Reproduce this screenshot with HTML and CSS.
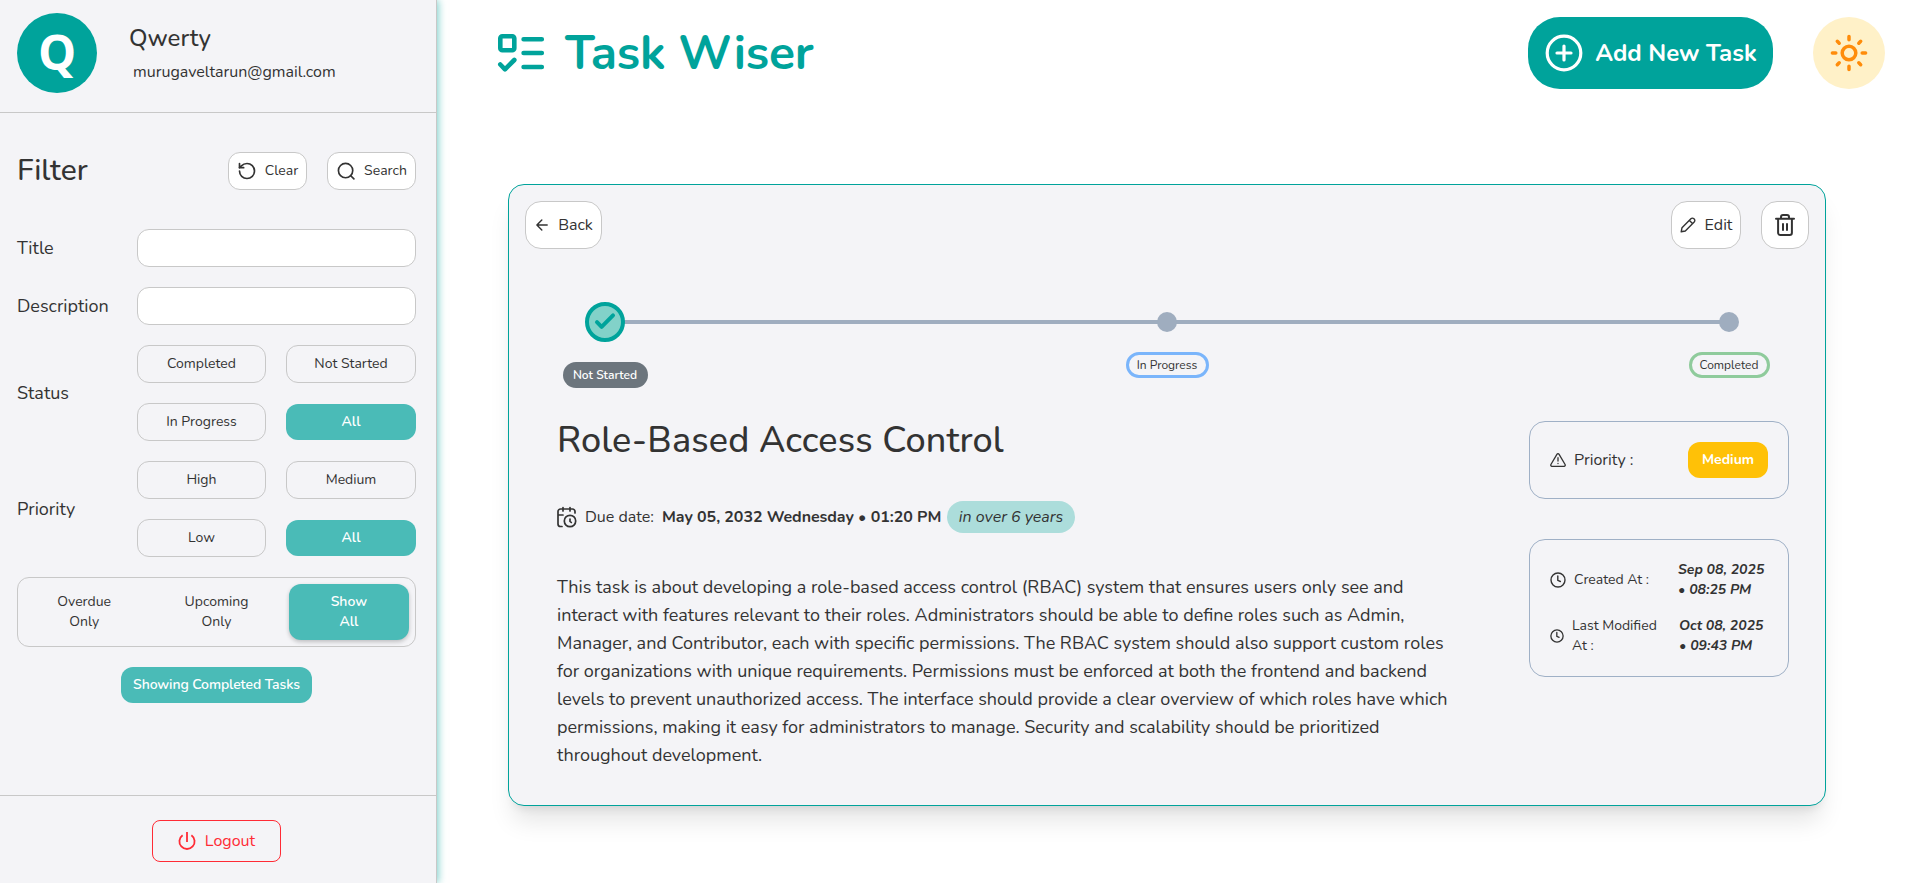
FILE: index.html
```html
<!DOCTYPE html>
<html lang="en">
<head>
<meta charset="utf-8">
<title>Task Wiser</title>
<link rel="stylesheet" href="styles.css">
</head>
<body>
<div class="app">
  <aside class="sidebar">
    <div class="profile">
      <div class="avatar"><span>Q</span></div>
      <div class="profile-text">
        <div class="user-name"><span>Qwerty</span></div>
        <div class="user-mail"><span>murugaveltarun@gmail.com</span></div>
      </div>
    </div>
    <div class="filters">
      <div class="filter-head">
        <h2 class="filter-title"><span>Filter</span></h2>
        <button class="tool tool-clear">
          <svg width="20" height="20" viewBox="0 0 24 24" fill="none" stroke="currentColor" stroke-width="2" stroke-linecap="round" stroke-linejoin="round"><path d="M3 12a9 9 0 1 0 9-9 9.750 9.750 0 0 0-6.740 2.740L3 8"/><path d="M3 3v5h5"/></svg>
          <span>Clear</span>
        </button>
        <button class="tool tool-search">
          <svg width="20" height="20" viewBox="0 0 24 24" fill="none" stroke="currentColor" stroke-width="2" stroke-linecap="round"><circle cx="11.500" cy="11.500" r="8.600"/><path d="M21.500 21.500l-3.800-3.800"/></svg>
          <span>Search</span>
        </button>
      </div>
      <div class="row"><label class="label"><span>Title</span></label><input class="field" type="text"></div>
      <div class="row"><label class="label"><span>Description</span></label><input class="field" type="text"></div>
      <div class="row">
        <div class="label"><span>Status</span></div>
        <div class="options">
          <button class="opt"><span>Completed</span></button><button class="opt"><span>Not Started</span></button>
          <button class="opt"><span>In Progress</span></button><button class="opt opt-on"><span>All</span></button>
        </div>
      </div>
      <div class="row">
        <div class="label"><span>Priority</span></div>
        <div class="options">
          <button class="opt"><span>High</span></button><button class="opt"><span>Medium</span></button>
          <button class="opt"><span>Low</span></button><button class="opt opt-on"><span>All</span></button>
        </div>
      </div>
      <div class="segments">
        <div class="seg"><span>Overdue<br>Only</span></div>
        <div class="seg"><span>Upcoming<br>Only</span></div>
        <div class="seg seg-on"><span>Show<br>All</span></div>
      </div>
      <button class="showing"><span>Showing Completed Tasks</span></button>
    </div>
    <div class="side-foot">
      <button class="logout">
        <svg width="18" height="20" viewBox="0 0 18 20" fill="none" stroke="currentColor" stroke-width="1.800"><path d="M9 1v10"/><path d="M4.600 4.200a7.600 7.600 0 1 0 8.800 0"/></svg>
        <span>Logout</span>
      </button>
    </div>
  </aside>
  <main class="main">
    <header class="top">
      <svg class="brand-icon" width="48" height="40" viewBox="0 0 48 40" fill="none" stroke="#00a39b" stroke-width="4.600" stroke-linecap="round" stroke-linejoin="round"><rect x="3.300" y="3.300" width="14" height="14" rx="2"/><path d="M3.300 31.500l4.700 4.800 9.300-9.300M26.600 6.200h18.200M26.600 20h18.200M26.600 34h18.200"/></svg>
      <h1 class="brand"><span>Task Wiser</span></h1>
      <button class="add">
        <svg width="38" height="38" viewBox="0 0 38 38" fill="none" stroke="currentColor" stroke-width="3.200" stroke-linecap="round"><circle cx="19" cy="19" r="16.800"/><path d="M19 12v14M12 19h14"/></svg>
        <span>Add New Task</span>
      </button>
      <button class="theme">
        <svg width="40" height="40" viewBox="0 0 40 40" fill="none" stroke="#ff8c0a" stroke-width="3.500" stroke-linecap="round"><circle cx="20" cy="20" r="6.800"/><path d="M20 3.400v3.400M20 33.200v3.400M3.400 20h3.400M33.200 20h3.400M8.300 8.300l1.900 1.900M29.800 29.800l1.900 1.900M8.300 31.700l1.900-1.900M29.800 10.200l1.900-1.900"/></svg>
      </button>
    </header>
    <section class="card">
      <div class="card-bar">
        <button class="btn btn-back">
          <svg width="12" height="12" viewBox="0 0 12 12" fill="none" stroke="currentColor" stroke-width="1.400" stroke-linecap="round" stroke-linejoin="round"><path d="M11.200 6H1M5.800 1L.9 6l4.900 5"/></svg>
          <span>Back</span>
        </button>
        <button class="btn btn-edit">
          <svg width="16" height="16" viewBox="0 0 16 16" fill="none" stroke="currentColor" stroke-width="1.400" stroke-linejoin="round"><path d="M1.200 14.800l.8-4.100L10.900 1.800a2.100 2.100 0 0 1 3 0l.3.3a2.100 2.100 0 0 1 0 3L5.300 14z"/><path d="M9.400 3.400l3.200 3.200"/></svg>
          <span>Edit</span>
        </button>
        <button class="btn btn-del">
          <svg width="20" height="22" viewBox="0 0 20 22" fill="none" stroke="currentColor" stroke-width="2" stroke-linecap="round" stroke-linejoin="round"><path d="M1 4.800h18M3.100 4.800v14a2.200 2.200 0 0 0 2.200 2.200h9.400a2.200 2.200 0 0 0 2.200-2.200v-14M6 4.500V3a2 2 0 0 1 2-2h4a2 2 0 0 1 2 2v1.500M8 10v6M12 10v6"/></svg>
        </button>
      </div>
      <div class="steps">
        <div class="step step-first">
          <div class="node node-on"><svg width="22" height="20" viewBox="0 0 22 20" fill="none" stroke="#00a39b" stroke-width="4" stroke-linecap="round" stroke-linejoin="round"><path d="M3 10.200l4.600 4.600L19 3.400"/></svg></div>
          <div class="tag tag-grey"><span>Not Started</span></div>
        </div>
        <div class="step">
          <div class="node"></div>
          <div class="tag tag-blue"><span>In Progress</span></div>
        </div>
        <div class="step">
          <div class="node"></div>
          <div class="tag tag-green"><span>Completed</span></div>
        </div>
      </div>
      <div class="detail">
        <div class="story">
          <h2 class="task-title"><span>Role-Based Access Control</span></h2>
          <div class="due">
            <svg width="20" height="22" viewBox="0 0 20 22" fill="none" stroke="currentColor" stroke-width="1.700" stroke-linecap="round"><path d="M6 1.500v3.500M13 1.500v3.500M18 7V5.500a2.500 2.500 0 0 0-2.500-2.500h-12A2.500 2.500 0 0 0 1 5.500v12.500A2.500 2.500 0 0 0 3.500 20.500H5M1 9h5M13 13v2.300l1.300 1.200"/><circle cx="13" cy="15" r="5.700"/></svg>
            <span class="due-label">Due date:</span>
            <span class="due-date">May 05, 2032 Wednesday • 01:20 PM</span>
            <div class="due-left"><span>in over 6 years</span></div>
          </div>
          <p class="body-text">This task is about developing a role-based access control (RBAC) system that ensures users only see and interact with features relevant to their roles. Administrators should be able to define roles such as Admin, Manager, and Contributor, each with specific permissions. The RBAC system should also support custom roles for organizations with unique requirements. Permissions must be enforced at both the frontend and backend levels to prevent unauthorized access. The interface should provide a clear overview of which roles have which permissions, making it easy for administrators to manage. Security and scalability should be prioritized throughout development.</p>
        </div>
        <div class="meta">
          <div class="box box-priority">
            <svg width="16" height="14" viewBox="0 0 16 14" fill="none" stroke="currentColor" stroke-width="1.300" stroke-linecap="round" stroke-linejoin="round"><path d="M6.900 1.300L.9 11.500a1.200 1.200 0 0 0 1 1.800h12.200a1.200 1.200 0 0 0 1-1.800L9.100 1.300a1.300 1.300 0 0 0-2.200 0zM8 4.700v3.300M8 10.300v.2"/></svg>
            <span class="prio-label">Priority :</span>
            <div class="badge"><span>Medium</span></div>
          </div>
          <div class="box box-dates">
            <div class="date-row">
              <svg width="16" height="16" viewBox="0 0 16 16" fill="none" stroke="currentColor" stroke-width="1.400" stroke-linecap="round"><circle cx="8" cy="8" r="7"/><path d="M7.800 4v4.300l2.600 1.200"/></svg>
              <span class="date-label">Created At :</span>
              <span class="date-val">Sep 08, 2025<br>• 08:25 PM</span>
            </div>
            <div class="date-row date-row-2">
              <svg width="14" height="14" viewBox="0 0 16 16" fill="none" stroke="currentColor" stroke-width="1.500" stroke-linecap="round"><circle cx="8" cy="8" r="7"/><path d="M7.800 4v4.300l2.600 1.200"/></svg>
              <span class="date-label">Last Modified<br>At :</span>
              <span class="date-val">Oct 08, 2025<br>• 09:43 PM</span>
            </div>
          </div>
        </div>
      </div>
    </section>
  </main>
</div>
</body>
</html>
```
FILE: styles.css
```css
* { box-sizing: border-box; }
body { margin: 0; font-family: Nunito, Lato, "Noto Sans", sans-serif; font-size: 16px; line-height: 24px; color: #333; background: #fff; }
h1, h2, p { margin: 0; font-weight: 400; }
button { font: inherit; color: inherit; background: none; border: 0; padding: 0; margin: 0; display: flex; align-items: center; justify-content: center; }
svg { flex: none; display: block; }
span { white-space: nowrap; }

.app { display: flex; height: 883px; overflow: hidden; }

.sidebar { width: 437px; flex: none; display: flex; flex-direction: column; background: #f4f4f7; border-right: 1px solid #c8c8c8; box-shadow: 1px 0 8px rgba(0,163,155,.55); }
.profile { height: 113px; flex: none; display: flex; padding: 13px 0 0 17px; border-bottom: 1px solid #c8c8c8; }
.avatar { width: 80px; height: 80px; border-radius: 50%; background: #00a39b; color: #fff; font-family: "Open Sans", "Noto Sans", sans-serif; font-size: 48px; font-weight: 700; display: flex; align-items: center; justify-content: center; padding-bottom: 2px; }
.profile-text { padding: 9px 0 0 32px; }
.user-name { font-size: 24px; line-height: 32px; font-weight: 500; }
.user-mail { line-height: 24px; margin: 6px 0 0 4px; }

.filters { flex: 1; padding: 39px 20px 0 17px; display: flex; flex-direction: column; gap: 20px; }
.filter-head { display: flex; align-items: center; gap: 20px; height: 38px; margin-bottom: 19px; }
.filter-title { font-size: 30px; line-height: 38px; font-weight: 500; margin-right: auto; }
.tool { height: 38px; background: #fff; border: 1px solid #c8c8c8; border-radius: 12px; font-size: 14px; gap: 8px; }
.tool-clear { width: 79px; }
.tool-search { width: 89px; }
.row { display: flex; align-items: center; }
.label { width: 120px; flex: none; font-size: 18px; }
.field { flex: 1; min-width: 0; height: 38px; background: #fff; border: 1px solid #c8c8c8; border-radius: 12px; }
.options { flex: 1; display: grid; grid-template-columns: 129px 130px; gap: 20px; }
.opt { height: 38px; border: 1px solid #c8c8c8; border-radius: 12px; font-size: 14px; }
.opt-on { height: 36px; align-self: center; border: 0; background: #4abbb7; color: #fff; font-weight: 600; }
.segments { height: 70px; display: grid; grid-template-columns: repeat(3, 1fr); gap: 12px; padding: 6px; border: 1px solid #c8c8c8; border-radius: 12px; font-size: 14px; line-height: 20px; text-align: center; }
.seg { display: flex; align-items: center; justify-content: center; border-radius: 12px; }
.seg-on { background: #4abbb7; color: #fff; font-weight: 600; box-shadow: 0 2px 4px rgba(0,0,0,.22); }
.showing { width: 191px; height: 36px; align-self: center; border-radius: 12px; background: #4abbb7; color: #fff; font-size: 14px; font-weight: 600; letter-spacing: -.1px; }
.side-foot { height: 88px; flex: none; border-top: 1px solid #c8c8c8; padding: 24px 3px 0 0; display: flex; justify-content: center; }
.logout { width: 129px; height: 42px; border: 1px solid #ff2b35; border-radius: 8px; color: #ff2b35; gap: 9px; }

.main { flex: 1; }
.top { display: flex; align-items: center; height: 72px; margin: 17px 28px 0 60px; }
.brand { font-size: 48px; line-height: 60px; font-weight: 700; letter-spacing: -.25px; color: #00a39b; margin: 0 auto 0 20px; }
.add { width: 245px; height: 72px; border-radius: 32px; background: #00a39b; color: #fff; font-size: 24px; font-weight: 700; gap: 12px; margin-right: 40px; padding-left: 1px; }
.theme { width: 72px; height: 72px; border-radius: 50%; background: #fff1c8; }

.card { width: 1318px; height: 622px; margin: 95px 0 0 71px; border: 1px solid #00a39b; border-radius: 16px; background: #f4f4f7; box-shadow: 0 20px 25px -5px rgba(0,0,0,.1), 0 8px 10px -6px rgba(0,0,0,.1); padding: 16px; }
.card-bar { display: flex; height: 48px; gap: 20px; }
.btn { height: 48px; background: #fff; border: 1px solid #c8c8c8; border-radius: 16px; }
.btn-back { width: 77px; gap: 10px; margin-right: auto; padding-left: 2px; }
.btn-edit { width: 70px; gap: 9px; }
.btn-del { width: 48px; }

.steps { display: flex; justify-content: space-between; margin: 53px 38px 0 38px; height: 86px; background: linear-gradient(#9fadbf, #9fadbf) no-repeat 42px 18px / 1124px 4px; }
.step { width: 84px; display: flex; flex-direction: column; align-items: center; gap: 20px; padding-top: 10px; }
.step-first { padding-top: 0; }
.node { width: 20px; height: 20px; border-radius: 50%; background: #9fadbf; }
.node-on { width: 40px; height: 40px; border: 4px solid #00a39b; background: #82d2c9; display: flex; align-items: center; justify-content: center; }
.tag { height: 26px; border-radius: 13px; font-size: 12px; display: flex; align-items: center; justify-content: center; width: 83px; border: 3px solid; }
.tag-grey { width: 85px; border: 0; background: #6c757d; color: #fff; font-weight: 600; }
.tag span { color: #333; }
.tag-grey span { color: #fff; }
.tag-blue { border-color: #7ab5fb; }
.tag-green { width: 81px; border-color: #8fcb9c; }

.detail { display: flex; justify-content: space-between; padding: 0 20px 0 32px; }
.story { width: 900px; padding-top: 29px; }
.task-title { font-size: 36px; line-height: 48px; font-weight: 500; letter-spacing: .14px; }
.due { display: flex; align-items: center; height: 32px; margin-top: 36px; }
.due-label { margin-left: 8px; }
.due-date { width: 281px; margin-left: 8px; font-weight: 700; letter-spacing: -.06px; }
.due-left { width: 128px; height: 32px; margin-left: 4px; border-radius: 16px; background: #acdddb; font-style: italic; display: flex; align-items: center; justify-content: center; }
.body-text { font-size: 18px; line-height: 28px; margin-top: 40px; }
.meta { width: 260px; padding-top: 33px; }
.box { border: 1px solid #9fb0c6; border-radius: 16px; padding: 0 20px; }
.box-priority { height: 78px; display: flex; align-items: center; }
.prio-label { margin: 0 auto 0 8px; }
.badge { width: 80px; height: 36px; border-radius: 12px; background: #ffc107; color: #fff; font-size: 14px; font-weight: 700; display: flex; align-items: center; justify-content: center; }
.box-dates { height: 138px; margin-top: 40px; padding-top: 20px; font-size: 14px; line-height: 20px; }
.date-row { display: grid; grid-template-columns: 16px 96px 1fr; column-gap: 8px; align-items: center; height: 40px; }
.date-row-2 { margin-top: 16px; grid-template-columns: 14px 99px 1fr; }
.date-val { font-style: italic; font-weight: 700; }
```
